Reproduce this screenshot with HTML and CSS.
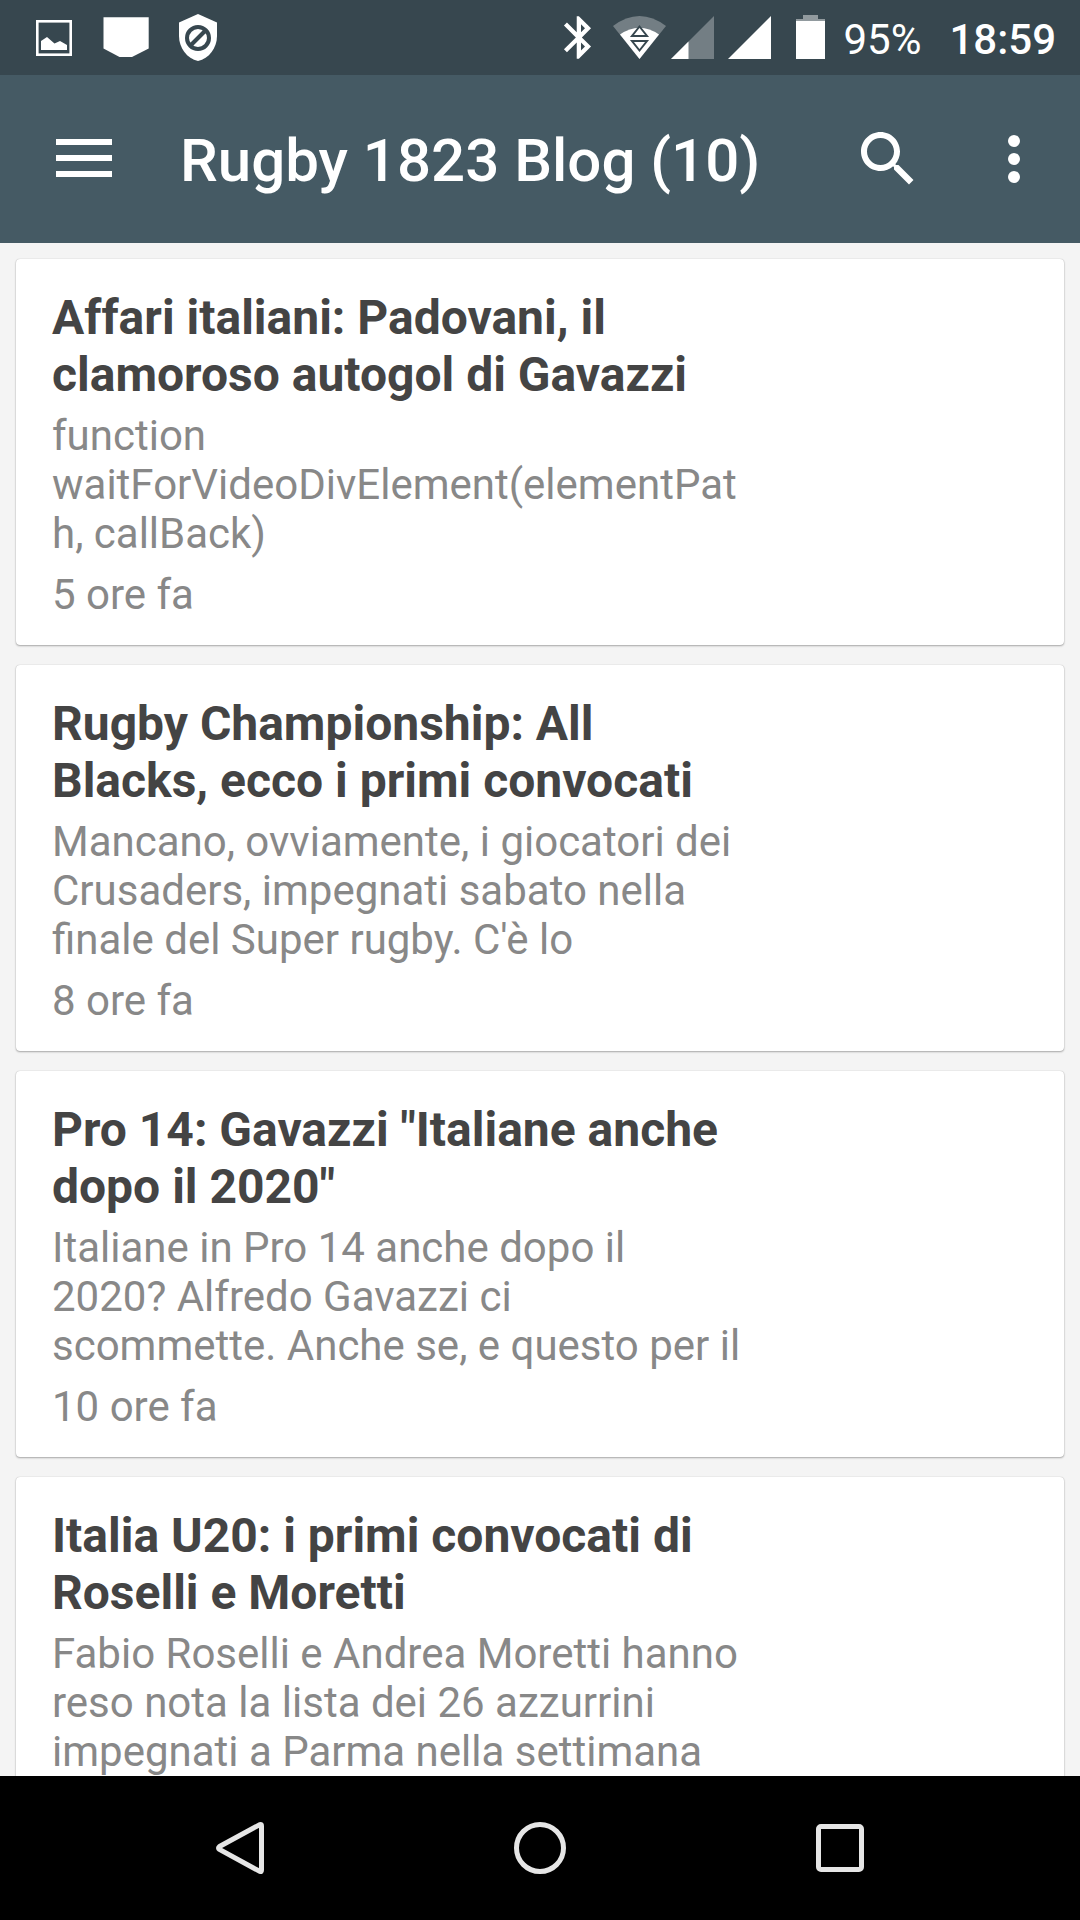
FILE: index.html
```html
<!DOCTYPE html>
<html lang="it">
<head>
<meta charset="utf-8">
<meta name="viewport" content="width=device-width, initial-scale=1">
<title>Rugby 1823 Blog</title>
<link rel="stylesheet" href="styles.css">
</head>
<body>
<div class="status">
  <div class="status-icons">
    <svg width="72" height="75" viewBox="18 0 72 75" aria-hidden="true"><rect x="37.300" y="21.300" width="33.400" height="33.400" fill="none" stroke="#fff" stroke-width="2.600"/><path fill="#fff" d="M41 50V41L47 37 54.500 43.500 60 41 67 45V50Z"/></svg>
    <svg width="72" height="75" viewBox="90 0 72 75" aria-hidden="true"><path fill="#fff" d="M103.500 17.300H148.700V48.500L132 57H119.500L103.500 48.500Z"/></svg>
    <svg width="72" height="75" viewBox="162 0 72 75" aria-hidden="true"><path fill="#fff" d="M198 14L217 22.500V36C217 48 209 58.500 198 61 187 58.500 179 48 179 36V22.500Z"/><g fill="none" stroke="#37474f" stroke-width="4"><circle cx="198" cy="38" r="11"/><path d="M190 46L206 30"/></g></svg>
  </div>
  <div class="status-icons">
    <svg width="60" height="75" viewBox="548 0 60 75" aria-hidden="true"><path fill="#fff" transform="translate(553.300 11.900) scale(2.130)" d="M17.710 7.710L12 2h-1v7.590L6.410 5 5 6.410 10.590 12 5 17.590 6.410 19 11 14.410V22h1l5.710-5.710-4.300-4.290 4.300-4.290zM13 5.830l1.880 1.880L13 9.590V5.830zm1.880 10.460L13 18.170v-3.760l1.880 1.880z"/></svg>
    <svg width="60" height="75" viewBox="608 0 60 75" aria-hidden="true"><path fill="#fff" fill-opacity=".3" d="M613 26Q639.500 6 666 26L639.500 59Z"/><path fill="#fff" d="M620 34.500Q639.500 21 659 34.500L639.500 59Z"/><path fill="#fff" stroke="#37474f" stroke-width="2" d="M639.500 26.500L647 36H632ZM639.500 50.500L647 41H632Z"/></svg>
    <svg width="56" height="75" viewBox="668 0 56 75" aria-hidden="true"><path fill="#fff" fill-opacity=".3" d="M714 16V59H671Z"/><path fill="#fff" d="M688.500 41.500V59H671Z"/></svg>
    <svg width="56" height="75" viewBox="724 0 56 75" aria-hidden="true"><path fill="#fff" d="M771 16V59H728Z"/></svg>
    <svg width="60" height="75" viewBox="780 0 60 75" aria-hidden="true"><path fill="#fff" fill-opacity=".45" d="M803 15H818V19H825V21H796V19H803Z"/><path fill="#fff" d="M796 21H825V59H796Z"/></svg>
    <span class="battery">95%</span>
    <time class="clock" datetime="18:59">18:59</time>
  </div>
</div>

<header class="toolbar">
  <button class="tool tool-menu" type="button" aria-label="Menu"><svg width="72" height="72" viewBox="0 0 72 72"><path fill="#fff" d="M8 16H64V22H8ZM8 32H64V38H8ZM8 48H64V54H8Z"/></svg></button>
  <h1 class="heading">Rugby 1823 Blog (10)</h1>
  <button class="tool tool-search" type="button" aria-label="Cerca"><svg width="72" height="72" viewBox="0 0 24 24"><path fill="#fff" d="M15.500 14h-.790l-.280-.270C15.410 12.590 16 11.110 16 9.500 16 5.910 13.090 3 9.500 3S3 5.910 3 9.500 5.910 16 9.500 16c1.610 0 3.090-.590 4.230-1.570l.270.280v.790l5 4.990L20.490 19l-4.990-5zm-6 0C7.010 14 5 11.990 5 9.500S7.010 5 9.500 5 14 7.010 14 9.500 11.990 14 9.500 14z"/></svg></button>
  <button class="tool tool-more" type="button" aria-label="Altre opzioni"><svg width="72" height="72" viewBox="0 0 24 24" fill="#fff"><circle cx="12" cy="6" r="2"/><circle cx="12" cy="12" r="2"/><circle cx="12" cy="18" r="2"/></svg></button>
</header>

<main class="feed">
  <article class="card">
    <h2 class="title">Affari italiani: Padovani, il clamoroso autogol di Gavazzi</h2>
    <p class="excerpt">function waitForVideoDivElement(elementPath, callBack)</p>
    <p class="age">5 ore fa</p>
  </article>
  <article class="card">
    <h2 class="title">Rugby Championship: All Blacks, ecco i primi convocati</h2>
    <p class="excerpt">Mancano, ovviamente, i giocatori dei Crusaders, impegnati sabato nella finale del Super rugby. C'è lo</p>
    <p class="age">8 ore fa</p>
  </article>
  <article class="card">
    <h2 class="title">Pro 14: Gavazzi "Italiane anche dopo il 2020"</h2>
    <p class="excerpt">Italiane in Pro 14 anche dopo il 2020? Alfredo Gavazzi ci scommette. Anche se, e questo per il</p>
    <p class="age">10 ore fa</p>
  </article>
  <article class="card">
    <h2 class="title">Italia U20: i primi convocati di Roselli e Moretti</h2>
    <p class="excerpt">Fabio Roselli e Andrea Moretti hanno reso nota la lista dei 26 azzurrini impegnati a Parma nella settimana</p>
  </article>
</main>

<nav class="navbar" aria-label="Sistema">
  <button class="nav-button" type="button" aria-label="Indietro"><svg width="72" height="72" viewBox="0 0 72 72"><path d="M15.500 34.500L56 12.500Q57.500 12 57.500 14V58Q57.500 60 56 59.500L15.500 37.500Q13.500 36 15.500 34.500Z"/></svg></button>
  <button class="nav-button" type="button" aria-label="Home"><svg width="72" height="72" viewBox="0 0 72 72"><circle cx="36" cy="36" r="23.500"/></svg></button>
  <button class="nav-button" type="button" aria-label="Recenti"><svg width="72" height="72" viewBox="0 0 72 72"><rect x="14.500" y="14.500" width="43" height="43" rx="2.500"/></svg></button>
</nav>
</body>
</html>
```
FILE: styles.css
```css
* {
  box-sizing: border-box;
}

body {
  margin: 0;
  height: 100vh;
  display: flex;
  flex-direction: column;
  background: #f4f4f4;
  font-family: Roboto, sans-serif;
}

h1,
h2,
p {
  margin: 0;
}

button {
  border: 0;
  padding: 0;
  background: none;
}

svg {
  display: block;
  flex: none;
}

.status {
  flex: none;
  display: flex;
  justify-content: space-between;
  padding: 0 24px 0 18px;
  background: #37474f;
  color: #fff;
  font-size: 42px;
  line-height: 49px;
}

.status-icons {
  display: flex;
  align-items: center;
}

.battery,
.clock {
  padding-top: 4px;
}

.battery {
  margin: 0 28px 0 3px;
}

.clock {
  font-weight: 500;
}

.toolbar {
  flex: none;
  height: 168px;
  display: flex;
  align-items: center;
  padding-right: 12px;
  background: #455a64;
  color: #fff;
}

.tool {
  flex: none;
  height: 100%;
  display: flex;
  align-items: center;
  justify-content: center;
}

.tool-menu {
  width: 168px;
}

.tool-search {
  width: 144px;
}

.tool-more {
  width: 108px;
}

.heading {
  flex: 1;
  padding: 4px 0 0 12px;
  font-size: 60px;
  line-height: 70px;
  font-weight: 500;
  white-space: nowrap;
}

.feed {
  flex: 1;
  min-height: 0;
  overflow: hidden;
  display: flex;
  flex-direction: column;
  gap: 20px;
  padding: 16px 16px 0;
}

/* The wide right padding is the thumbnail column, empty for these posts. */
.card {
  flex: none;
  padding: 30px 322px 26px 36px;
  border-radius: 4px;
  background: #fff;
  box-shadow: 0 0 1px rgba(0, 0, 0, 0.25), 0 1px 2px rgba(0, 0, 0, 0.3);
}

.title {
  color: #444;
  font-size: 48px;
  line-height: 57px;
  font-weight: 700;
}

.excerpt,
.age {
  color: #888;
  font-size: 42px;
  line-height: 49px;
  overflow-wrap: break-word;
}

.excerpt {
  margin-top: 8px;
}

.age {
  margin-top: 12px;
}

.navbar {
  flex: none;
  height: 144px;
  display: grid;
  grid-template-columns: repeat(3, 1fr);
  padding: 0 90px;
  background: #000;
}

.nav-button {
  display: flex;
  align-items: center;
  justify-content: center;
}

.nav-button svg {
  fill: none;
  stroke: #e6e6e6;
  stroke-width: 5;
}
```
